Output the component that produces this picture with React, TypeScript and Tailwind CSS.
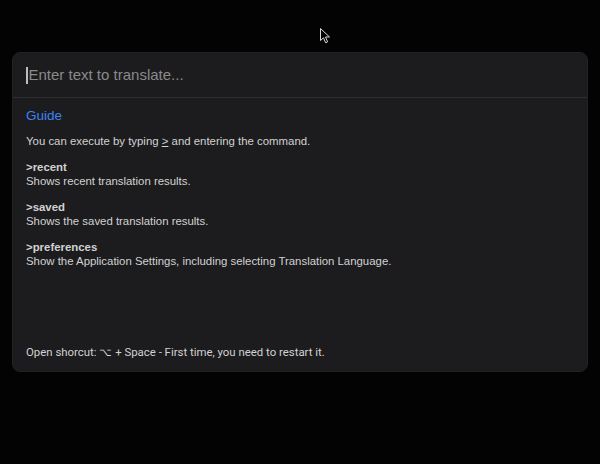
import React from "react";

export default function App() {
  return (
    <div className="relative w-[600px] h-[464px] bg-[#030303] pt-[52px] px-[12px]" style={{ fontFamily: '"Liberation Sans", Arial, sans-serif' }}>
      <svg className="absolute left-[320px] top-[28px]" width="11" height="16" viewBox="0 0 11 16">
        <path d="M0.5 0.5 L0.5 12.5 L3.5 9.8 L5.6 14.8 L7.6 13.9 L5.5 9 L9.5 9 Z" fill="#000" stroke="#d8d8d8" strokeWidth="1" />
      </svg>
      <div className="w-[576px] h-[320px] rounded-[8px] bg-[#1c1c1e] border border-[#222224] flex flex-col">
        <div className="h-[45px] flex items-center pl-[13px] border-b border-[#2f2f31]">
          <div className="w-[1.5px] h-[17px] bg-[#bdbdbd] mr-[1px]" />
          <span className="text-[15px] text-[#8a8a8c] pt-[1px]">Enter text to translate...</span>
        </div>
        <div className="flex-1 flex flex-col px-[13px] pt-[10px] pb-[12px]">
          <div className="text-[13.5px] leading-[16px] text-[#3d82f5]">Guide</div>
          <div className="mt-[10px] text-[11.4px] leading-[14px] text-[#d2d2d2]">
            You can execute by typing <span className="underline underline-offset-1">&gt;</span> and entering the command.
          </div>
          <div className="mt-[12px] text-[11.4px] leading-[14px] text-[#d2d2d2]">
            <div className="font-bold">&gt;recent</div>
            <div>Shows recent translation results.</div>
          </div>
          <div className="mt-[12px] text-[11.4px] leading-[14px] text-[#d2d2d2]">
            <div className="font-bold">&gt;saved</div>
            <div>Shows the saved translation results.</div>
          </div>
          <div className="mt-[12px] text-[11.4px] leading-[14px] text-[#d2d2d2]">
            <div className="font-bold">&gt;preferences</div>
            <div>Show the Application Settings, including selecting Translation Language.</div>
          </div>
          <div className="mt-auto text-[11.4px] leading-[14px] text-[#d2d2d2]" style={{ fontFamily: 'Roboto, "Liberation Sans", sans-serif' }}>
            Open shorcut: ⌥ + Space - First time, you need to restart it.
          </div>
        </div>
      </div>
    </div>
  );
}
